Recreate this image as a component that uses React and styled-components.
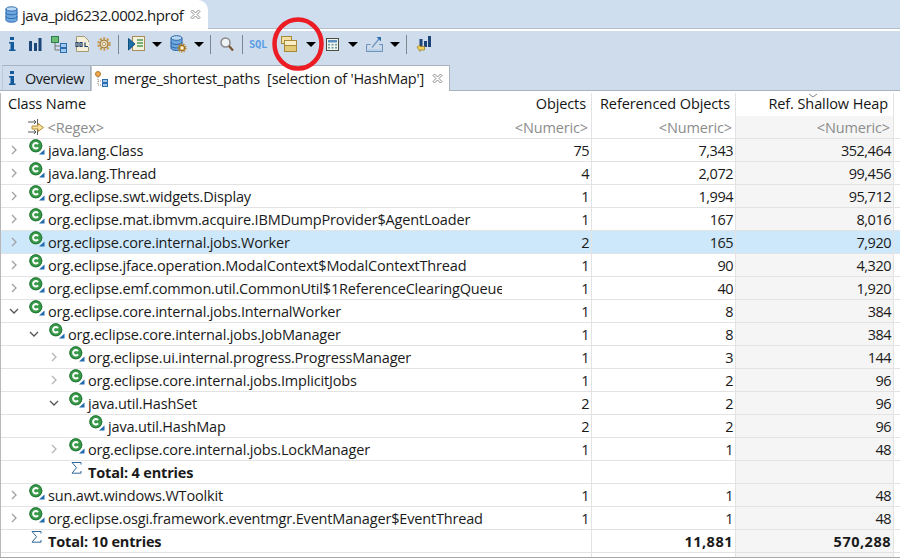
import styled, { createGlobalStyle } from 'styled-components';

const GlobalStyle = createGlobalStyle`
  html, body { margin: 0; padding: 0; background: #fff; }
  body { font-family: "Open Sans", "Noto Sans", "Liberation Sans", sans-serif; color: #1a1a1a; }
`;

const Page = styled.div`
  position: relative;
  width: 900px;
  height: 558px;
  overflow: hidden;
  background: #fff;
`;

const EditorBar = styled.div`
  display: flex;
  height: 28px;
  background: #cfdeee;
  border-bottom: 1px solid #b5bfca;
`;

const EditorTab = styled.div`
  display: flex;
  align-items: center;
  width: 208px;
  height: 29px;
  box-sizing: border-box;
  padding-left: 5px;
  background: #fff;
  border-top-right-radius: 10px;
  font-size: 15px;
  letter-spacing: -0.45px;
  gap: 4px;
`;

const CloseBox = styled.span`
  display: flex;
  margin-left: ${(p) => p.$left || 0}px;
`;

const Toolbar = styled.div`
  display: flex;
  align-items: center;
  height: 34px;
  margin-top: 2px;
  padding-bottom: 8px;
  box-sizing: border-box;
  background: #cfdcec;
`;

const Slot = styled.div`
  display: flex;
  align-items: center;
  justify-content: center;
  flex: none;
  width: ${(p) => p.$w}px;
`;

const Sep = styled(Slot)`
  &::after {
    content: '';
    width: 1px;
    height: 19px;
    background: #7d8790;
  }
`;

const Arrow = styled(Slot)`
  &::after {
    content: '';
    border-left: 5px solid transparent;
    border-right: 5px solid transparent;
    border-top: 5px solid #000;
  }
`;

const ViewBar = styled.div`
  display: flex;
  height: 25px;
  background: #cfdcec;
  border-bottom: 1px solid #a9b3bd;
  box-sizing: content-box;
`;

const ViewTab = styled.div`
  display: flex;
  align-items: center;
  box-sizing: border-box;
  height: ${(p) => (p.$active ? 26 : 25)}px;
  width: ${(p) => p.$w}px;
  margin-left: ${(p) => p.$left || 0}px;
  padding-left: ${(p) => p.$pad}px;
  gap: ${(p) => p.$gap}px;
  font-size: 14.5px;
  letter-spacing: ${(p) => (p.$active ? -0.2 : -0.5)}px;
  background: ${(p) => (p.$active ? '#fff' : '#cfdcec')};
  border-top: 1px solid #a9b3bd;
  border-left: 1px solid #c0c9d2;
  border-right: 1px solid #a9b3bd;
  white-space: pre;
`;

const Table = styled.div`
  display: grid;
  grid-template-columns: 501px 90px 144px 158px 6px;
  grid-template-rows: repeat(20, 23px) 4px;
  width: 900px;
  margin-top: 2px;
  box-sizing: border-box;
  border-left: 1px solid #b8b8b8;
  font-size: 14.5px;
`;

const Cell = styled.div`
  display: flex;
  align-items: center;
  justify-content: ${(p) => (p.$left ? 'flex-start' : 'flex-end')};
  min-width: 0;
  overflow: hidden;
  white-space: nowrap;
  box-sizing: border-box;
  padding-right: ${(p) => (p.$left ? 0 : 2)}px;
  padding-left: ${(p) => p.$indent || 0}px;
  border-right: ${(p) => (p.$left ? 'none' : '1px solid #e3e3e3')};
  border-bottom: 1px solid #e3e3e3;
  font-weight: ${(p) => (p.$bold ? 700 : 400)};
  letter-spacing: ${(p) => (p.$left ? -0.17 : p.$bold ? 0.5 : -0.5)}px;
  background: ${(p) => (p.$selected ? '#cde8fb' : p.$shade ? '#f5f5f5' : 'transparent')};
`;

const EdgeCell = styled.div`
  border-bottom: 1px solid #e3e3e3;
  background: ${(p) => (p.$selected ? '#cde8fb' : 'transparent')};
`;

const HeaderCell = styled(Cell)`
  position: relative;
  border-bottom: none;
  padding-right: ${(p) => (p.$left ? 0 : 5)}px;
  padding-left: ${(p) => (p.$left ? 7 : 0)}px;
  padding-bottom: 2px;
  letter-spacing: -0.1px;
  color: #151515;
`;

const BlankEnd = styled.div``;

const FilterCell = styled(Cell)`
  color: #8c8c8c;
  padding-right: 3px;
  letter-spacing: -0.15px;
`;

const FillerCell = styled.div`
  border-right: ${(p) => (p.$plain ? 'none' : '1px solid #e3e3e3')};
  background: ${(p) => (p.$shade ? '#f5f5f5' : 'transparent')};
`;

const SortMark = styled.svg`
  position: absolute;
  top: 0;
  left: 72px;
`;

const Expander = styled.span`
  display: flex;
  justify-content: center;
  flex: none;
  width: 12px;
  margin-right: 9px;
`;

const RowIcon = styled.span`
  display: flex;
  flex: none;
  width: 16px;
  height: 16px;
  margin: -7px 3px 0 0;
`;

const SigmaIcon = styled(RowIcon)`
  padding-left: 2px;
  box-sizing: border-box;
  margin-top: -4px;
`;

const BottomRule = styled.div`
  width: 900px;
  height: 2px;
  background: #a8a8a8;
`;

const Ring = styled.svg`
  position: absolute;
  left: 270px;
  top: 15px;
`;

const InfoIcon = () => (
  <svg width="10" height="16" viewBox="0 0 10 16">
    <rect x="3" y="1" width="4" height="3" fill="#125a9c" />
    <path d="M2 6h5v7.500h1.500V15h-6.500v-1.500h1.500V7.500H2z" fill="#125a9c" />
  </svg>
);

const BarsIcon = () => (
  <svg width="13" height="13" viewBox="0 0 13 13">
    <path d="M0 3h3v10H0zM5 5h3v8H5zM9.500 0h3v13h-3z" fill="#1c4679" />
  </svg>
);

const TreeIcon = () => (
  <svg width="16" height="17" viewBox="0 0 16 17">
    <rect x="0.500" y="0.500" width="7" height="6" fill="#6cbb72" stroke="#2e7d4f" />
    <path d="M4 7v7h5M4 10h5" stroke="#777" fill="none" />
    <rect x="9.500" y="7.500" width="6" height="4" fill="#9fc9ee" stroke="#2d6cad" />
    <rect x="9.500" y="12.500" width="6" height="4" fill="#9fc9ee" stroke="#2d6cad" />
  </svg>
);

const OqlIcon = () => (
  <svg width="14" height="16" viewBox="0 0 14 16">
    <path d="M1.500.5h8l4 4v11h-12z" fill="#f4efd8" stroke="#a59a78" />
    <rect x="0" y="6" width="14" height="5" fill="#f4efd8" />
    <path d="M1 6.500v4h2v-4zM5 6.500v4h2.500M5 10.500v-4h2v4M10 6.500v4h3" fill="none" stroke="#203f6b" strokeWidth="1.200" />
  </svg>
);

const GearIcon = ({ size = 16, fill = '#c99a4d' }) => (
  <svg width={size} height={size} viewBox="0 0 16 16">
    <circle cx="8" cy="8" r="5.500" fill="none" stroke={fill} strokeWidth="2.500" strokeDasharray="2 1.500" />
    <circle cx="8" cy="8" r="4" fill="#eadbb8" stroke="#9a7738" />
    <circle cx="8" cy="8" r="1.600" fill="#fff" stroke="#9a7738" strokeWidth="0.700" />
  </svg>
);

const RunIcon = () => (
  <svg width="17" height="16" viewBox="0 0 17 16">
    <rect x="4.500" y="0.500" width="12" height="14" fill="#f4f1df" stroke="#a98d55" />
    <path d="M9 4h6M9 7h6M9 10h6" stroke="#4f9a54" strokeWidth="1.500" />
    <path d="M0.500 2.500L7 8l-6.500 6z" fill="#1d6fa8" stroke="#134f7d" />
  </svg>
);

const DbIcon = () => (
  <svg width="17" height="18" viewBox="0 0 17 18">
    <path d="M1 3v10c0 1.500 2.500 2.500 5.500 2.500s5.500-1 5.500-2.500V3z" fill="#6ea8de" stroke="#2563a8" />
    <ellipse cx="6.500" cy="3" rx="5.500" ry="2.300" fill="#bcd9f3" stroke="#2563a8" />
    <path d="M1 7c0 1.500 2.500 2.500 5.500 2.500S12 8.500 12 7M1 10.500c0 1.500 2.500 2.500 5.500 2.500s5.500-1 5.500-2.500" fill="none" stroke="#2563a8" />
    <g transform="translate(7 8)">
      <circle cx="5" cy="5" r="3.600" fill="none" stroke="#c08a2e" strokeWidth="2" strokeDasharray="1.500 1" />
      <circle cx="5" cy="5" r="2.700" fill="#e9c77d" stroke="#8f6a22" />
      <circle cx="5" cy="5" r="1" fill="#fff" />
    </g>
  </svg>
);

const SearchIcon = () => (
  <svg width="14" height="15" viewBox="0 0 14 15">
    <circle cx="5.500" cy="5.500" r="4.500" fill="#eef3f6" stroke="#8a8a8a" strokeWidth="1.500" />
    <path d="M9 9l4 4.500" stroke="#7a5230" strokeWidth="2.200" />
  </svg>
);

const SqlMark = styled.span`
  font-family: "DejaVu Sans Mono", monospace;
  font-size: 10.5px;
  font-weight: 700;
  letter-spacing: -0.3px;
  color: #5b9fe4;
`;

const StackIcon = () => (
  <svg width="16" height="16" viewBox="0 0 16 16">
    <rect x="0.500" y="0.500" width="10" height="7" fill="#f3dfa2" stroke="#a68a3c" />
    <rect x="3.500" y="4.500" width="12" height="6" fill="#fbeec4" stroke="#a68a3c" />
    <rect x="3.500" y="9.500" width="12" height="6" fill="#e4c977" stroke="#a68a3c" />
  </svg>
);

const CalcIcon = () => (
  <svg width="13" height="13" viewBox="0 0 13 13">
    <rect x="0.500" y="0.500" width="12" height="12" fill="#eef3ee" stroke="#4a4f46" />
    <rect x="2" y="2" width="9" height="2.500" fill="#5d8fc0" />
    <path d="M2 6h2v1.500H2zM5.500 6h2v1.500h-2zM9 6h2v1.500H9zM2 9h2v1.500H2zM5.500 9h2v1.500h-2zM9 9h2v1.500H9z" fill="#6e9c9a" />
  </svg>
);

const ExportIcon = () => (
  <svg width="17" height="16" viewBox="0 0 17 16">
    <path d="M.5 8.500v7h16v-7h-3.500M.5 8.500h4" fill="none" stroke="#6f95bf" strokeWidth="1.200" />
    <rect x="2" y="13" width="13" height="2" fill="#b8cfe6" />
    <path d="M6 11.500L13 3" stroke="#6f95bf" strokeWidth="1.200" />
    <path d="M10.500 1H15v4.500z" fill="#2b6ea8" />
  </svg>
);

const CompareIcon = () => (
  <svg width="15" height="18" viewBox="0 0 15 18">
    <path d="M3.500 4h3v8h-3zM8 6h3v6H8zM12 1h3v11h-3z" fill="#1d4577" />
    <path d="M1 12l3-2v1.500h4.500V15H4v1.500z" fill="#f2cf5a" stroke="#9a7a1c" strokeWidth="0.700" />
  </svg>
);

const FileDbIcon = () => (
  <svg width="13" height="17" viewBox="0 0 14 18">
    <path d="M1 3v12c0 1.300 2.500 2.300 6 2.300s6-1 6-2.300V3z" fill="#6ea8de" stroke="#2563a8" />
    <ellipse cx="7" cy="3" rx="6" ry="2.300" fill="#bcd9f3" stroke="#2563a8" />
    <path d="M1 7c0 1.300 2.500 2.300 6 2.300s6-1 6-2.300M1 11c0 1.300 2.500 2.300 6 2.300s6-1 6-2.300" fill="none" stroke="#2563a8" />
  </svg>
);

const MergeIcon = () => (
  <svg width="14" height="16" viewBox="0 0 14 16">
    <circle cx="3" cy="3" r="2.500" fill="#f0a94e" stroke="#b87a2a" />
    <path d="M3 6v8h4M3 10h4" stroke="#8a8a8a" strokeDasharray="1 1" fill="none" />
    <rect x="7.500" y="8.500" width="5" height="3" fill="#9fc9ee" stroke="#2d6cad" />
    <rect x="7.500" y="12.500" width="5" height="3" fill="#9fc9ee" stroke="#2d6cad" />
  </svg>
);

const CloseIcon = () => (
  <svg width="11" height="11" viewBox="0 0 11 11">
    <path d="M1 2.500L2.500 1 5.500 4 8.500 1 10 2.500 7 5.500 10 8.500 8.500 10 5.500 7 2.500 10 1 8.500 4 5.500z" fill="#fff" stroke="#8d8d8d" />
  </svg>
);

const ClassIcon = () => (
  <svg width="16" height="16" viewBox="0 0 16 16">
    <path d="M15.500 10.500v5H10z" fill="#1f6bb0" />
    <circle cx="6.800" cy="6.800" r="6.500" fill="#389a48" />
    <circle cx="6.800" cy="6.800" r="6" fill="none" stroke="#25763a" strokeWidth="1" />
    <path d="M9 5.200A2.700 2.700 0 1 0 9 8.400" fill="none" stroke="#fff" strokeWidth="2" />
  </svg>
);

const Sigma = () => (
  <svg width="11" height="12" viewBox="0 0 11 12">
    <path d="M10 2.500V.5H1l4.500 5.200L1 11.200h9V9" fill="none" stroke="#2f6796" />
  </svg>
);

const Chevron = ({ open, muted }) =>
  open ? (
    <svg width="10" height="6" viewBox="0 0 10 6">
      <path d="M1 1l4 4 4-4" fill="none" stroke="#555" strokeWidth="1.300" />
    </svg>
  ) : (
    <svg width="6" height="10" viewBox="0 0 6 10">
      <path d="M1 1l4 4-4 4" fill="none" stroke={muted ? '#b5b5b5' : '#a0a0a0'} strokeWidth="1.300" />
    </svg>
  );

const FilterGlyph = () => (
  <svg width="16" height="16" viewBox="0 0 16 16">
    <path d="M0 3h8M0 13h8M6 1l2 2-2 2M6 11l2 2-2 2M9.500 0v6M9.500 10v6" fill="none" stroke="#5a5a5a" />
    <path d="M4 7h6V4.500L15.500 8.500 10 12.500V10H4z" fill="#f7e2a6" stroke="#b98a2c" />
  </svg>
);

const rows = [
  { depth: 0, exp: 'closed', name: 'java.lang.Class', a: '75', b: '7,343', c: '352,464' },
  { depth: 0, exp: 'closed', name: 'java.lang.Thread', a: '4', b: '2,072', c: '99,456' },
  { depth: 0, exp: 'closed', name: 'org.eclipse.swt.widgets.Display', a: '1', b: '1,994', c: '95,712' },
  { depth: 0, exp: 'closed', name: 'org.eclipse.mat.ibmvm.acquire.IBMDumpProvider$AgentLoader', a: '1', b: '167', c: '8,016' },
  { depth: 0, exp: 'closed', name: 'org.eclipse.core.internal.jobs.Worker', a: '2', b: '165', c: '7,920', selected: true },
  { depth: 0, exp: 'closed', name: 'org.eclipse.jface.operation.ModalContext$ModalContextThread', a: '1', b: '90', c: '4,320' },
  { depth: 0, exp: 'closed', name: 'org.eclipse.emf.common.util.CommonUtil$1ReferenceClearingQueue', a: '1', b: '40', c: '1,920' },
  { depth: 0, exp: 'open', name: 'org.eclipse.core.internal.jobs.InternalWorker', a: '1', b: '8', c: '384' },
  { depth: 1, exp: 'open', name: 'org.eclipse.core.internal.jobs.JobManager', a: '1', b: '8', c: '384' },
  { depth: 2, exp: 'closed', name: 'org.eclipse.ui.internal.progress.ProgressManager', a: '1', b: '3', c: '144' },
  { depth: 2, exp: 'closed', name: 'org.eclipse.core.internal.jobs.ImplicitJobs', a: '1', b: '2', c: '96' },
  { depth: 2, exp: 'open', name: 'java.util.HashSet', a: '2', b: '2', c: '96' },
  { depth: 3, name: 'java.util.HashMap', a: '2', b: '2', c: '96' },
  { depth: 2, exp: 'closed', name: 'org.eclipse.core.internal.jobs.LockManager', a: '1', b: '1', c: '48' },
  { depth: 2, total: true, name: 'Total: 4 entries', a: '', b: '', c: '' },
  { depth: 0, exp: 'closed', name: 'sun.awt.windows.WToolkit', a: '1', b: '1', c: '48' },
  { depth: 0, exp: 'closed', name: 'org.eclipse.osgi.framework.eventmgr.EventManager$EventThread', a: '1', b: '1', c: '48' },
  { depth: 0, total: true, name: 'Total: 10 entries', a: '', b: '11,881', c: '570,288' },
];

const TreeRow = ({ row }) => {
  const { depth, exp, name, a, b, c, selected, total } = row;
  return (
    <>
      <Cell $left $selected={selected} $indent={7 + depth * 20} $bold={total}>
        <Expander>{exp && <Chevron open={exp === 'open'} muted={depth > 0} />}</Expander>
        {total ? (
          <SigmaIcon>
            <Sigma />
          </SigmaIcon>
        ) : (
          <RowIcon>
            <ClassIcon />
          </RowIcon>
        )}
        {name}
      </Cell>
      <Cell $selected={selected} $bold={total}>{a}</Cell>
      <Cell $selected={selected} $bold={total}>{b}</Cell>
      <Cell $shade $selected={selected} $bold={total}>{c}</Cell>
      <EdgeCell $selected={selected} />
    </>
  );
};

export default function App() {
  return (
    <Page>
      <GlobalStyle />
      <EditorBar>
        <EditorTab>
          <FileDbIcon />
          java_pid6232.0002.hprof
          <CloseBox $left={3}>
            <CloseIcon />
          </CloseBox>
        </EditorTab>
      </EditorBar>
      <Toolbar>
        <Slot $w={24}><InfoIcon /></Slot>
        <Slot $w={23}><BarsIcon /></Slot>
        <Slot $w={24}><TreeIcon /></Slot>
        <Slot $w={22}><OqlIcon /></Slot>
        <Slot $w={22}><GearIcon /></Slot>
        <Sep $w={6} />
        <Slot $w={30}><RunIcon /></Slot>
        <Arrow $w={12} />
        <Slot $w={30}><DbIcon /></Slot>
        <Arrow $w={12} />
        <Sep $w={10} />
        <Slot $w={24}><SearchIcon /></Slot>
        <Sep $w={6} />
        <Slot $w={26}><SqlMark>SQL</SqlMark></Slot>
        <Slot $w={36}><StackIcon /></Slot>
        <Arrow $w={8} />
        <Slot $w={34}><CalcIcon /></Slot>
        <Arrow $w={8} />
        <Slot $w={34}><ExportIcon /></Slot>
        <Arrow $w={8} />
        <Sep $w={15} />
        <Slot $w={18}><CompareIcon /></Slot>
      </Toolbar>
      <ViewBar>
        <ViewTab $w={89} $left={2} $pad={4} $gap={8}>
          <InfoIcon />
          Overview
        </ViewTab>
        <ViewTab $active $w={359} $pad={3} $gap={5}>
          <MergeIcon />
          {"merge_shortest_paths  [selection of 'HashMap']"}
          <CloseBox $left={3}>
            <CloseIcon />
          </CloseBox>
        </ViewTab>
      </ViewBar>
      <Table>
        <HeaderCell $left>Class Name</HeaderCell>
        <HeaderCell>Objects</HeaderCell>
        <HeaderCell>Referenced Objects</HeaderCell>
        <HeaderCell>
          <SortMark width="10" height="5" viewBox="0 0 10 5">
            <path d="M1 1l4 3 4-3" fill="none" stroke="#8a8a8a" />
          </SortMark>
          Ref. Shallow Heap
        </HeaderCell>
        <BlankEnd />
        <FilterCell $left $indent={27}>
          <FilterGlyph />
          &nbsp;&lt;Regex&gt;
        </FilterCell>
        <FilterCell>&lt;Numeric&gt;</FilterCell>
        <FilterCell>&lt;Numeric&gt;</FilterCell>
        <FilterCell $shade>&lt;Numeric&gt;</FilterCell>
        <EdgeCell />
        {rows.map((row) => (
          <TreeRow key={row.name} row={row} />
        ))}
        <FillerCell $plain />
        <FillerCell />
        <FillerCell />
        <FillerCell $shade />
        <FillerCell $plain />
      </Table>
      <BottomRule />
      <Ring width="56" height="58" viewBox="0 0 56 58">
        <ellipse cx="28" cy="29" rx="23.500" ry="24.500" fill="none" stroke="#ec1c24" strokeWidth="4.500" />
      </Ring>
    </Page>
  );
}
